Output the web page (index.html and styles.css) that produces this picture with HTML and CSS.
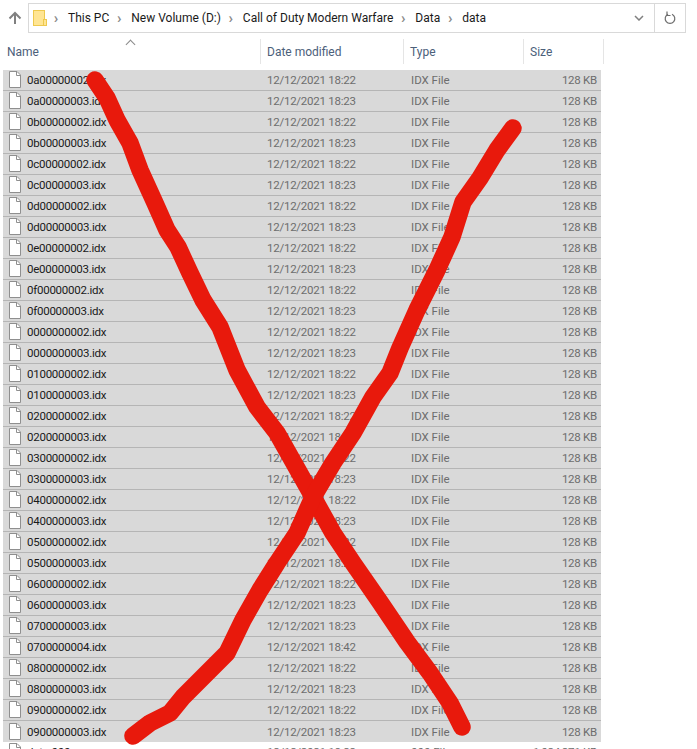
FILE: index.html
```html
<!doctype html>
<html lang="en">
<head>
  <meta charset="utf-8">
  <title>data</title>
  <link rel="stylesheet" href="styles.css">
</head>
<body>
  <svg class="defs" width="0" height="0">
    <symbol id="file" viewBox="0 0 14 18">
      <path d="M1.5 .5H9L12.5 4V16.5H1.5Z" fill="#fff" stroke="#8f8f8f"/>
      <path d="M8.5 .5V4.5H12.5" fill="none" stroke="#8f8f8f"/>
    </symbol>
  </svg>

  <div class="window">
    <div class="toolbar">
      <button class="up">
        <svg width="16" height="16" viewBox="0 0 16 16"><path d="M8 14V3M2.5 8.5L8 3L13.5 8.5" fill="none" stroke="#808080" stroke-width="2"/></svg>
      </button>
      <div class="address">
        <svg class="folder" width="14" height="16" viewBox="0 0 14 16">
          <rect x=".5" y=".5" width="11" height="15" fill="#ffe593" stroke="#eec94e"/>
          <rect x="10.5" y="9.5" width="3" height="6" fill="#ffe593" stroke="#eec94e"/>
        </svg>
        <div class="crumbs">
          <span class="sep">›</span><span>This PC</span>
          <span class="sep">›</span><span>New Volume (D:)</span>
          <span class="sep">›</span><span>Call of Duty Modern Warfare</span>
          <span class="sep">›</span><span>Data</span>
          <span class="sep">›</span><span>data</span>
        </div>
        <div class="dropdown">
          <svg width="10" height="6" viewBox="0 0 10 6"><path d="M1 1L5 5L9 1" fill="none" stroke="#808080" stroke-width="1.5"/></svg>
        </div>
        <div class="refresh">
          <svg width="12" height="14" viewBox="0 0 12 14"><path d="M4 3.2A4.8 4.8 0 1 0 8 3.2" fill="none" stroke="#6d6d6d" stroke-width="1.2"/><path d="M3 .5V4.5H6.5" fill="none" stroke="#6d6d6d" stroke-width="1.2"/></svg>
        </div>
      </div>
    </div>

    <div class="columns">
      <div class="col col-name">Name<span class="sort"></span></div>
      <div class="col col-date">Date modified</div>
      <div class="col col-type">Type</div>
      <div class="col col-size">Size</div>
    </div>

    <div class="list">
      <div class="row sel"><svg class="icon"><use href="#file"/></svg><span class="name">0a00000002.idx</span><span class="date">12/12/2021 18:22</span><span class="type">IDX File</span><span class="size">128 KB</span></div>
      <div class="row sel"><svg class="icon"><use href="#file"/></svg><span class="name">0a00000003.idx</span><span class="date">12/12/2021 18:23</span><span class="type">IDX File</span><span class="size">128 KB</span></div>
      <div class="row sel"><svg class="icon"><use href="#file"/></svg><span class="name">0b00000002.idx</span><span class="date">12/12/2021 18:22</span><span class="type">IDX File</span><span class="size">128 KB</span></div>
      <div class="row sel"><svg class="icon"><use href="#file"/></svg><span class="name">0b00000003.idx</span><span class="date">12/12/2021 18:23</span><span class="type">IDX File</span><span class="size">128 KB</span></div>
      <div class="row sel"><svg class="icon"><use href="#file"/></svg><span class="name">0c00000002.idx</span><span class="date">12/12/2021 18:22</span><span class="type">IDX File</span><span class="size">128 KB</span></div>
      <div class="row sel"><svg class="icon"><use href="#file"/></svg><span class="name">0c00000003.idx</span><span class="date">12/12/2021 18:23</span><span class="type">IDX File</span><span class="size">128 KB</span></div>
      <div class="row sel"><svg class="icon"><use href="#file"/></svg><span class="name">0d00000002.idx</span><span class="date">12/12/2021 18:22</span><span class="type">IDX File</span><span class="size">128 KB</span></div>
      <div class="row sel"><svg class="icon"><use href="#file"/></svg><span class="name">0d00000003.idx</span><span class="date">12/12/2021 18:23</span><span class="type">IDX File</span><span class="size">128 KB</span></div>
      <div class="row sel"><svg class="icon"><use href="#file"/></svg><span class="name">0e00000002.idx</span><span class="date">12/12/2021 18:22</span><span class="type">IDX File</span><span class="size">128 KB</span></div>
      <div class="row sel"><svg class="icon"><use href="#file"/></svg><span class="name">0e00000003.idx</span><span class="date">12/12/2021 18:23</span><span class="type">IDX File</span><span class="size">128 KB</span></div>
      <div class="row sel"><svg class="icon"><use href="#file"/></svg><span class="name">0f00000002.idx</span><span class="date">12/12/2021 18:22</span><span class="type">IDX File</span><span class="size">128 KB</span></div>
      <div class="row sel"><svg class="icon"><use href="#file"/></svg><span class="name">0f00000003.idx</span><span class="date">12/12/2021 18:23</span><span class="type">IDX File</span><span class="size">128 KB</span></div>
      <div class="row sel"><svg class="icon"><use href="#file"/></svg><span class="name">0000000002.idx</span><span class="date">12/12/2021 18:22</span><span class="type">IDX File</span><span class="size">128 KB</span></div>
      <div class="row sel"><svg class="icon"><use href="#file"/></svg><span class="name">0000000003.idx</span><span class="date">12/12/2021 18:23</span><span class="type">IDX File</span><span class="size">128 KB</span></div>
      <div class="row sel"><svg class="icon"><use href="#file"/></svg><span class="name">0100000002.idx</span><span class="date">12/12/2021 18:22</span><span class="type">IDX File</span><span class="size">128 KB</span></div>
      <div class="row sel"><svg class="icon"><use href="#file"/></svg><span class="name">0100000003.idx</span><span class="date">12/12/2021 18:23</span><span class="type">IDX File</span><span class="size">128 KB</span></div>
      <div class="row sel"><svg class="icon"><use href="#file"/></svg><span class="name">0200000002.idx</span><span class="date">12/12/2021 18:22</span><span class="type">IDX File</span><span class="size">128 KB</span></div>
      <div class="row sel"><svg class="icon"><use href="#file"/></svg><span class="name">0200000003.idx</span><span class="date">12/12/2021 18:23</span><span class="type">IDX File</span><span class="size">128 KB</span></div>
      <div class="row sel"><svg class="icon"><use href="#file"/></svg><span class="name">0300000002.idx</span><span class="date">12/12/2021 18:22</span><span class="type">IDX File</span><span class="size">128 KB</span></div>
      <div class="row sel"><svg class="icon"><use href="#file"/></svg><span class="name">0300000003.idx</span><span class="date">12/12/2021 18:23</span><span class="type">IDX File</span><span class="size">128 KB</span></div>
      <div class="row sel"><svg class="icon"><use href="#file"/></svg><span class="name">0400000002.idx</span><span class="date">12/12/2021 18:22</span><span class="type">IDX File</span><span class="size">128 KB</span></div>
      <div class="row sel"><svg class="icon"><use href="#file"/></svg><span class="name">0400000003.idx</span><span class="date">12/12/2021 18:23</span><span class="type">IDX File</span><span class="size">128 KB</span></div>
      <div class="row sel"><svg class="icon"><use href="#file"/></svg><span class="name">0500000002.idx</span><span class="date">12/12/2021 18:22</span><span class="type">IDX File</span><span class="size">128 KB</span></div>
      <div class="row sel"><svg class="icon"><use href="#file"/></svg><span class="name">0500000003.idx</span><span class="date">12/12/2021 18:23</span><span class="type">IDX File</span><span class="size">128 KB</span></div>
      <div class="row sel"><svg class="icon"><use href="#file"/></svg><span class="name">0600000002.idx</span><span class="date">12/12/2021 18:22</span><span class="type">IDX File</span><span class="size">128 KB</span></div>
      <div class="row sel"><svg class="icon"><use href="#file"/></svg><span class="name">0600000003.idx</span><span class="date">12/12/2021 18:23</span><span class="type">IDX File</span><span class="size">128 KB</span></div>
      <div class="row sel"><svg class="icon"><use href="#file"/></svg><span class="name">0700000003.idx</span><span class="date">12/12/2021 18:23</span><span class="type">IDX File</span><span class="size">128 KB</span></div>
      <div class="row sel"><svg class="icon"><use href="#file"/></svg><span class="name">0700000004.idx</span><span class="date">12/12/2021 18:42</span><span class="type">IDX File</span><span class="size">128 KB</span></div>
      <div class="row sel"><svg class="icon"><use href="#file"/></svg><span class="name">0800000002.idx</span><span class="date">12/12/2021 18:22</span><span class="type">IDX File</span><span class="size">128 KB</span></div>
      <div class="row sel"><svg class="icon"><use href="#file"/></svg><span class="name">0800000003.idx</span><span class="date">12/12/2021 18:23</span><span class="type">IDX File</span><span class="size">128 KB</span></div>
      <div class="row sel"><svg class="icon"><use href="#file"/></svg><span class="name">0900000002.idx</span><span class="date">12/12/2021 18:22</span><span class="type">IDX File</span><span class="size">128 KB</span></div>
      <div class="row sel"><svg class="icon"><use href="#file"/></svg><span class="name">0900000003.idx</span><span class="date">12/12/2021 18:23</span><span class="type">IDX File</span><span class="size">128 KB</span></div>
      <div class="row last"><svg class="icon"><use href="#file"/></svg><span class="name">data.000</span><span class="date">12/12/2021 18:23</span><span class="type">000 File</span><span class="size">1,024,271 KB</span></div>
    </div>

    <!-- the red cross drawn over the screenshot -->
    <svg class="scribble" width="697" height="749" viewBox="0 0 697 749">
      <path d="M95 80L107 98L117 120L130 143L140 170L155 203L167 230L178 247L190 273L203 300L220 327L237 370L257 407L277 433L313 497L333 533L353 563L380 602L407 642L430 673L450 703L462 727"/>
      <path d="M513 128L497 150L480 178L463 202L452 237L437 270L417 310L400 348L390 373L373 397L353 433L333 463L313 497L297 533L277 563L260 590L243 620L227 653L207 673L183 697L170 713L150 723L133 736"/>
    </svg>
  </div>
</body>
</html>
```

FILE: styles.css
```css
html,
body {
  margin: 0;
  padding: 0;
  background: white;
  overflow: hidden;
}

.defs {
  display: block;
}

.window {
  position: relative;
  width: 697px;
  height: 749px;
  overflow: hidden;
  font-family: Roboto, "Liberation Sans", sans-serif;
  font-size: 12px;
}

.toolbar {
  display: flex;
  align-items: center;
  height: 34px;
  padding-top: 2px;
  box-sizing: border-box;
}

.up {
  width: 28px;
  height: 30px;
  border: 0;
  padding: 0 0 0 2px;
  background: none;
  display: flex;
  align-items: center;
  justify-content: center;
}

.address {
  display: flex;
  align-items: center;
  flex: 0 0 658px;
  height: 30px;
  box-sizing: border-box;
  border: 1px solid #d9d9d9;
}

.folder {
  margin-left: 4px;
}

.crumbs {
  flex: 1;
  display: flex;
  align-items: center;
  color: #1a1a1a;
  white-space: nowrap;
  padding-left: 2px;
}

.sep {
  color: #8a8a8a;
  font-size: 15px;
  font-weight: 700;
  width: 14px;
  text-align: center;
  margin-right: 5px;
}

.crumbs span:not(.sep) {
  margin-right: 3px;
}

.dropdown {
  width: 30px;
  display: flex;
  justify-content: center;
}

.refresh {
  width: 30px;
  height: 28px;
  border-left: 1px solid #d9d9d9;
  display: flex;
  align-items: center;
  justify-content: center;
}

.columns {
  display: grid;
  grid-template-columns: 261px 143px 120px 80px;
  width: 604px;
  height: 25px;
  margin-top: 5px;
  color: #4c607a;
}

.col {
  position: relative;
  display: flex;
  align-items: center;
  padding-left: 6px;
  border-right: 1px solid #e5e5e5;
  box-sizing: border-box;
}

.col-name {
  padding-left: 7px;
}

.sort {
  position: absolute;
  left: 127px;
  top: 2px;
  width: 6px;
  height: 6px;
  border-left: 1px solid #8a8a8a;
  border-top: 1px solid #8a8a8a;
  transform: rotate(45deg);
}

.list {
  margin: 6px 0 0 3px;
  width: 598px;
}

.row {
  display: grid;
  grid-template-columns: 24px 240px 144px 120px 70px;
  align-items: center;
  height: 21px;
  box-sizing: border-box;
  color: #6d6d6d;
  font-size: 11.5px;
  letter-spacing: -0.25px;
  white-space: nowrap;
}

.row.sel {
  background: #d9d9d9;
  border-bottom: 1px solid #b5b5b5;
}

.row.sel:nth-child(32) {
  border-bottom: 0;
}

/* the next row, cut off by the window edge */
.row.last {
  padding-bottom: 2px;
}

.icon {
  width: 14px;
  height: 18px;
  margin-left: 5px;
}

.name {
  color: #1a1a1a;
}

.type {
  letter-spacing: 0;
}

.size {
  text-align: right;
  padding-right: 4px;
}

.scribble {
  position: absolute;
  left: 0;
  top: 0;
}

.scribble path {
  fill: none;
  stroke: #e8190c;
  stroke-width: 17.5;
  stroke-linecap: round;
  stroke-linejoin: round;
}
```
